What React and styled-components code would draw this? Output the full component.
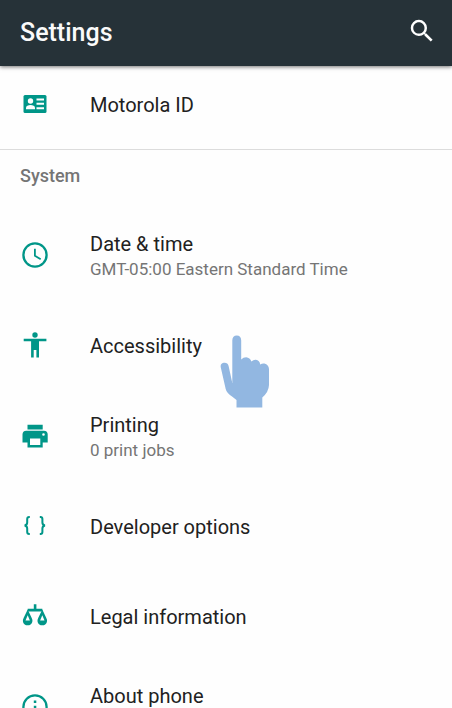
import React from "react";
import styled, { createGlobalStyle } from "styled-components";

const TEAL = "#009688";

const GlobalStyle = createGlobalStyle`
  *, *::before, *::after { box-sizing: border-box; }
  body {
    margin: 0;
    background: #fefefe;
    color: #212121;
    font-family: Roboto, "Noto Sans", sans-serif;
  }
`;

const Screen = styled.div`
  display: flex;
  flex-direction: column;
  height: 100vh;
  overflow: hidden;
`;

const AppBar = styled.header`
  position: relative;
  z-index: 1;
  flex: none;
  display: flex;
  align-items: center;
  justify-content: space-between;
  height: 66px;
  padding: 0 15px 0 20px;
  background: #263238;
  box-shadow: 0 1px 4px rgba(0, 0, 0, 0.55);
`;

const AppTitle = styled.h1`
  margin: 0;
  color: #fafafa;
  font-size: 25px;
  line-height: 32px;
  font-weight: 500;
`;

const IconButton = styled.button`
  display: flex;
  padding: 0;
  margin-bottom: 4px;
  border: 0;
  background: none;
  color: #fff;
  cursor: pointer;
`;

const Content = styled.main`
  flex: 1;
  min-height: 0;
  overflow: hidden;
`;

const Section = styled.section`
  border-bottom: ${(p) => (p.$divided ? "1px solid #dcdcdc" : "0")};
  padding-top: ${(p) => (p.$divided ? "0" : "12px")};
`;

const SectionTitle = styled.h2`
  margin: 0 0 20px;
  padding: 0 20px;
  color: #757575;
  font-size: 18px;
  line-height: 27px;
  font-weight: 500;
`;

const List = styled.ul`
  margin: 0;
  padding: 0;
  list-style: none;
`;

const Item = styled.li`
  position: relative;
`;

const Row = styled.a`
  display: flex;
  align-items: center;
  gap: 39px;
  height: ${(p) => (p.$size === "compact" ? 83 : p.$size === "double" ? 91 : 90)}px;
  padding: ${(p) => (p.$size === "compact" ? "0 19px 7px" : "0 19px")};
  color: inherit;
  text-decoration: none;
`;

const RowText = styled.span`
  display: flex;
  flex-direction: column;
  min-width: 0;
  padding-top: 2px;
`;

const RowTitle = styled.span`
  font-size: 20px;
  line-height: 26px;
`;

const RowSummary = styled.span`
  color: #757575;
  font-size: 17px;
  line-height: 24px;
`;

const Glyph = styled.svg`
  flex: none;
  display: block;
  width: 32px;
  height: 32px;
  fill: none;
  color: ${TEAL};
`;

const HandSvg = styled.svg`
  position: absolute;
  top: 35px;
  left: 220px;
  width: 50px;
  height: 73px;
  fill: #92b7e1;
  z-index: 1;
  pointer-events: none;
`;

const SearchSvg = styled.svg`
  width: 30px;
  height: 30px;
  fill: currentColor;
`;

const Icon = ({ children }) => (
  <Glyph viewBox="0 0 32 32" aria-hidden="true">
    {children}
  </Glyph>
);

const CardIcon = () => (
  <Icon>
    <rect x="4.5" y="7" width="23" height="18" rx="1.5" fill={TEAL} />
    <g fill="#fefefe">
      <circle cx="11.5" cy="13" r="2.7" />
      <path d="M7 21.2v-1.4c0-2 2.2-2.8 4.5-2.8s4.5.8 4.5 2.8v1.4z" />
      <path d="M17.5 10.5h7.5v2h-7.5zM17.5 14.8h7.5v2h-7.5zM17.5 19.2h7.5v2h-7.5z" />
    </g>
  </Icon>
);

const ClockIcon = () => (
  <Icon>
    <circle cx="16" cy="16" r="11.6" stroke={TEAL} strokeWidth="2.3" />
    <path d="M15.9 9.7v7l5.8 3.5" stroke={TEAL} strokeWidth="1.8" />
  </Icon>
);

const PersonIcon = () => (
  <Icon>
    <g fill={TEAL}>
      <circle cx="16" cy="6" r="2.7" />
      <path d="M4.7 9.7h22.7v2.6H20v16.3h-2.6v-7.7h-2.7v7.7h-2.6V12.3H4.7z" />
    </g>
  </Icon>
);

const PrinterIcon = () => (
  <Icon>
    <path
      fill={TEAL}
      fillRule="evenodd"
      d="M8.5 4.7h15.2v4.9H8.5zM7.3 10.7h17.6a3.8 3.8 0 0 1 3.8 3.8v7.9h-5v5H8.5v-5h-5v-7.9a3.8 3.8 0 0 1 3.8-3.8zM11 18.5v6.4h10.3v-6.4zM24.5 13.2a1.3 1.3 0 1 0 0 2.6 1.3 1.3 0 0 0 0-2.6z"
    />
  </Icon>
);

const BracesIcon = () => (
  <Icon>
    <g stroke={TEAL} strokeWidth="2">
      <path d="M10.8 7h-.6q-2 0-2 2v3.6q0 2.6-2.6 3 2.6.4 2.6 3v3.4q0 2 2 2h.6" />
      <path d="M20.8 7h.6q2 0 2 2v3.6q0 2.600 2.600 3-2.600.4-2.600 3v3.400q0 2-2 2h-.6" />
    </g>
  </Icon>
);

const ScalesIcon = () => (
  <Icon>
    <g fill={TEAL} fillRule="evenodd">
      <path d="M14.8 4.2h2.6v4.6h5.9v2.8H8.7V8.8h6.1z" />
      <path d="M8.7 9.6 12.7 18q1.2 2.1.6 3.9a4.9 4.9 0 0 1-9.3 0Q3.5 20.1 4.6 18zM8.7 15.3 6.5 20.5h4.4z" />
      <path d="M23.3 9.6 27.3 18q1.2 2.1.6 3.9a4.9 4.9 0 0 1-9.3 0q-.5-1.8.6-3.9zM23.3 15.3 21.1 20.5h4.4z" />
    </g>
  </Icon>
);

const InfoIcon = () => (
  <Icon>
    <circle cx="16" cy="16" r="11.6" stroke={TEAL} strokeWidth="2.3" />
    <path fill={TEAL} d="M14.8 9.500h2.500V12h-2.500zM14.8 14.700h2.500v7.500h-2.500z" />
  </Icon>
);

const PointingHand = () => (
  <HandSvg viewBox="0 0 50 73" aria-hidden="true">
    <path d="M12.7 62Q6.5 58 5.7 54L.8 32.500Q0 28.500 3.600 27.800q4-.6 5 3.200L12.300 48V5.200Q12.500.4 16.800.4q4.200 0 4.400 4.800V24.500q2-2.200 5-2.200 3.800.3 5.200 4.200 2.200-2 4.500-1.700 3.700.5 4.300 4.700 2-1.400 4.200-1 4.300 1 4.600 5.500V50q-.3 7-6.700 12.500V72.500H16.500V65z" />
  </HandSvg>
);

const SYSTEM_ITEMS = [
  { title: "Date & time", summary: "GMT-05:00 Eastern Standard Time", icon: ClockIcon },
  { title: "Accessibility", icon: PersonIcon, pointed: true },
  { title: "Printing", summary: "0 print jobs", icon: PrinterIcon },
  { title: "Developer options", icon: BracesIcon },
  { title: "Legal information", icon: ScalesIcon },
  { title: "About phone", summary: "\u00a0", icon: InfoIcon },
];

function SettingItem({ title, summary, icon: ItemIcon, pointed, size }) {
  return (
    <Item>
      <Row href="#" $size={size || (summary ? "double" : "single")}>
        <ItemIcon />
        <RowText>
          <RowTitle>{title}</RowTitle>
          {summary && <RowSummary>{summary}</RowSummary>}
        </RowText>
      </Row>
      {pointed && <PointingHand />}
    </Item>
  );
}

export default function App() {
  return (
    <Screen>
      <GlobalStyle />
      <AppBar>
        <AppTitle>Settings</AppTitle>
        <IconButton type="button" aria-label="Search">
          <SearchSvg viewBox="0 0 24 24" aria-hidden="true">
            <path d="M15.5 14h-.79l-.28-.27A6.471 6.471 0 0 0 16 9.5 6.5 6.5 0 1 0 9.5 16c1.61 0 3.09-.59 4.23-1.57l.27.28v.79l5 4.99L20.49 19l-4.99-5zm-6 0C7.01 14 5 11.99 5 9.5S7.01 5 9.5 5 14 7.01 14 9.5 11.99 14 9.5 14z" />
          </SearchSvg>
        </IconButton>
      </AppBar>
      <Content>
        <Section $divided>
          <List>
            <SettingItem title="Motorola ID" icon={CardIcon} size="compact" />
          </List>
        </Section>
        <Section>
          <SectionTitle>System</SectionTitle>
          <List>
            {SYSTEM_ITEMS.map((item) => (
              <SettingItem key={item.title} {...item} />
            ))}
          </List>
        </Section>
      </Content>
    </Screen>
  );
}
